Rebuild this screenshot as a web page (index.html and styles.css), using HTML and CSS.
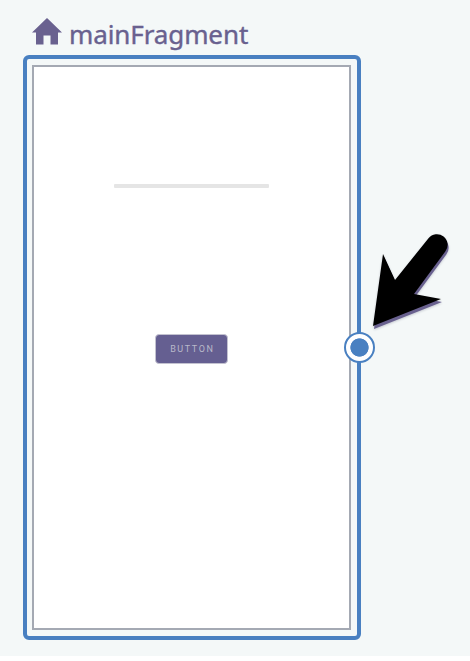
FILE: index.html
```html
<!DOCTYPE html>
<html lang="en">
<head>
<meta charset="utf-8">
<title>mainFragment</title>
<link rel="stylesheet" href="styles.css">
</head>
<body>
<main class="editor">
  <header class="title">
    <svg class="home" viewBox="0 0 30 27" aria-hidden="true"><path d="M15 0 0 14.5H4V26.5H11.5V17.5H18.5V26.5H26V14.5H30Z"/></svg>
    <span class="name">mainFragment</span>
  </header>
  <section class="frame">
    <div class="screen">
      <div class="line"></div>
      <div class="button">BUTTON</div>
    </div>
    <span class="handle"></span>
    <svg class="arrow" viewBox="0 0 80 106" aria-hidden="true">
      <path d="M5 98 15 26 27 52 60.5 10.2A10.7 10.7 0 0 1 77.3 23.5L46 66 73 71Z"/>
    </svg>
  </section>
</main>
</body>
</html>
```
FILE: styles.css
```css
* { box-sizing: border-box; }
body { margin: 0; background: #fff; }
.editor {
  height: 656px;
  padding: 18px 0 0 23px;
  background: #f4f8f8;
  overflow: hidden;
}
.title {
  display: flex;
  height: 37px;
  padding-left: 9px;
  color: #69618f;
}
.home { width: 30px; height: 27px; fill: #69618f; }
.name {
  margin: -1px 0 0 7px;
  font: 26px/34px "Noto Sans", sans-serif;
  letter-spacing: -0.1px;
  -webkit-text-stroke: 0.4px #69618f;
  white-space: nowrap;
}
.frame {
  position: relative;
  width: 338px;
  height: 585px;
  padding: 6px 6px 6px 5px;
  border: 4px solid #4980c1;
  border-radius: 6px;
}
.screen {
  display: flex;
  flex-direction: column;
  align-items: center;
  height: 565px;
  padding-top: 117px;
  border: 2px solid #a4a9b3;
  background: #fff;
}
.line { width: 155px; height: 4px; border-radius: 1px; background: #e5e5e5; }
.button {
  width: 73px;
  height: 30px;
  margin-top: 146px;
  border: 1px solid #c3c2d0;
  border-radius: 4px;
  background: #655f91;
  color: #b9b9ca;
  font: 9px/28px Roboto, sans-serif;
  letter-spacing: 1.6px;
  text-indent: 1.6px;
  text-align: center;
}
.handle {
  position: absolute;
  left: 316.5px;
  top: 273px;
  width: 31px;
  height: 31px;
  border: 2px solid #4980c1;
  border-radius: 50%;
  background: radial-gradient(circle, #4980c1 8.8px, #fff 9.5px);
}
.arrow {
  position: absolute;
  left: 341px;
  top: 169px;
  width: 80px;
  height: 106px;
  overflow: visible;
  filter: drop-shadow(1px 3px 0.6px #69618f) drop-shadow(0 1px 1px #c4c8d0);
}
```
